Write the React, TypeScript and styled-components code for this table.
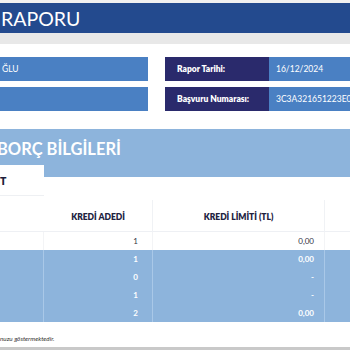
import React from 'react';
import styled, { createGlobalStyle } from 'styled-components';

const GlobalStyle = createGlobalStyle`
    html, body {
        margin: 0;
        padding: 0;
        background: #ffffff;
        font-family: Lato, "Open Sans", "DejaVu Sans", sans-serif;
    }
    #root {
        width: 350px;
        height: 350px;
        overflow: hidden;
    }
`;

const Page = styled.div`
    width: 350px;
    height: 350px;
    display: flex;
    flex-direction: column;
    overflow: hidden;
    border-top: 3px solid #f1f1f1;
    box-sizing: border-box;
`;

const TitleBar = styled.header`
    height: 30px;
    background-color: #234a8e;
    color: #ffffff;
    font-size: 19.5px;
    line-height: 31px;
    padding-left: 1px;
`;

const GrayStrip = styled.div`
    height: 11px;
    background-color: #e8e8e8;
`;

const InfoGrid = styled.section`
    display: grid;
    grid-template-columns: 148px 17px 104px 1fr;
    grid-auto-rows: 24px;
    row-gap: 6px;
    margin-top: 13px;
`;

interface CellProps {
    tone: 'light' | 'dark';
    bold?: boolean;
    indent?: number;
}

const InfoCell = styled.div<CellProps>`
    background-color: ${(props) => (props.tone === 'dark' ? '#2a2a6c' : '#4a80c3')};
    color: #ffffff;
    font-size: 8.5px;
    font-weight: ${(props) => (props.bold ? 800 : 400)};
    display: flex;
    align-items: center;
    padding-left: ${(props) => props.indent ?? 7}px;
    white-space: nowrap;
    overflow: hidden;
`;

const Spacer = styled.div``;

const SectionBand = styled.div`
    margin-top: 18px;
    height: 48px;
    background-color: #8db4dc;
    color: #ffffff;
    font-size: 16.5px;
    font-weight: 700;
    padding-top: 10px;
    box-sizing: border-box;
    text-indent: -3px;
    white-space: nowrap;
`;

const Tab = styled.div`
    margin-top: -12px;
    width: 44px;
    height: 31px;
    background-color: #ffffff;
    border-bottom: 1px solid #eef0f3;
    color: #1e1e3c;
    font-size: 10.5px;
    font-weight: 800;
    padding-top: 10px;
    box-sizing: border-box;
`;

const Table = styled.div`
    display: grid;
    grid-template-columns: 44px 109px 172px 1fr;
    grid-template-rows: 36px repeat(5, 18px);
`;

interface ColProps {
    line?: boolean;
}

const HeadCell = styled.div<ColProps>`
    margin-top: 4px;
    border-right: ${(props) => (props.line ? '1px solid #f0f2f5' : 'none')};
    border-bottom: 1px solid #eef0f4;
    display: flex;
    align-items: center;
    justify-content: center;
    font-size: 8.5px;
    font-weight: 800;
    color: #22223f;
    padding-top: 2px;
`;

interface RowCellProps {
    blue?: boolean;
    line?: boolean;
    pad?: number;
}

const RowCell = styled.div<RowCellProps>`
    background-color: ${(props) => (props.blue ? '#8db4dc' : '#ffffff')};
    border-right: ${(props) =>
        props.line ? `1px solid ${props.blue ? '#a9c8e8' : '#f3f4f6'}` : 'none'};
    color: ${(props) => (props.blue ? '#ffffff' : '#333344')};
    font-weight: ${(props) => (props.blue ? 700 : 400)};
    font-size: 8px;
    display: flex;
    align-items: center;
    justify-content: flex-end;
    padding-right: ${(props) => props.pad ?? 0}px;
`;

const Footnote = styled.p`
    margin: 13px 0 0;
    font-size: 6.3px;
    font-style: italic;
    color: #333333;
`;

const BottomRule = styled.div`
    margin-top: auto;
    height: 3px;
    background-color: #c9c9c9;
`;

const rows = [
    { blue: false, count: '1', limit: '0,00' },
    { blue: true, count: '1', limit: '0,00' },
    { blue: true, count: '0', limit: '-' },
    { blue: true, count: '1', limit: '-' },
    { blue: true, count: '2', limit: '0,00' },
];

export default function App(): JSX.Element {
    return (
        <>
            <GlobalStyle />
            <Page>
                <TitleBar>RAPORU</TitleBar>
                <GrayStrip />
                <InfoGrid>
                    <InfoCell tone="light" indent={2}>
                        ĞLU
                    </InfoCell>
                    <Spacer />
                    <InfoCell tone="dark" bold indent={12}>
                        Rapor Tarihi:
                    </InfoCell>
                    <InfoCell tone="light">16/12/2024</InfoCell>
                    <InfoCell tone="light" />
                    <Spacer />
                    <InfoCell tone="dark" bold indent={12}>
                        Başvuru Numarası:
                    </InfoCell>
                    <InfoCell tone="light">3C3A321651223E0A1B</InfoCell>
                </InfoGrid>
                <SectionBand>BORÇ BİLGİLERİ</SectionBand>
                <Tab>T</Tab>
                <Table>
                    <HeadCell />
                    <HeadCell line>KREDİ ADEDİ</HeadCell>
                    <HeadCell line>KREDİ LİMİTİ (TL)</HeadCell>
                    <HeadCell />
                    {rows.map((row, idx) => (
                        <React.Fragment key={idx}>
                            <RowCell blue={row.blue} line />
                            <RowCell blue={row.blue} line pad={14}>
                                {row.count}
                            </RowCell>
                            <RowCell blue={row.blue} line pad={10}>
                                {row.limit}
                            </RowCell>
                            <RowCell blue={row.blue} />
                        </React.Fragment>
                    ))}
                </Table>
                <Footnote>nuzu göstermektedir.</Footnote>
                <BottomRule />
            </Page>
        </>
    );
}
